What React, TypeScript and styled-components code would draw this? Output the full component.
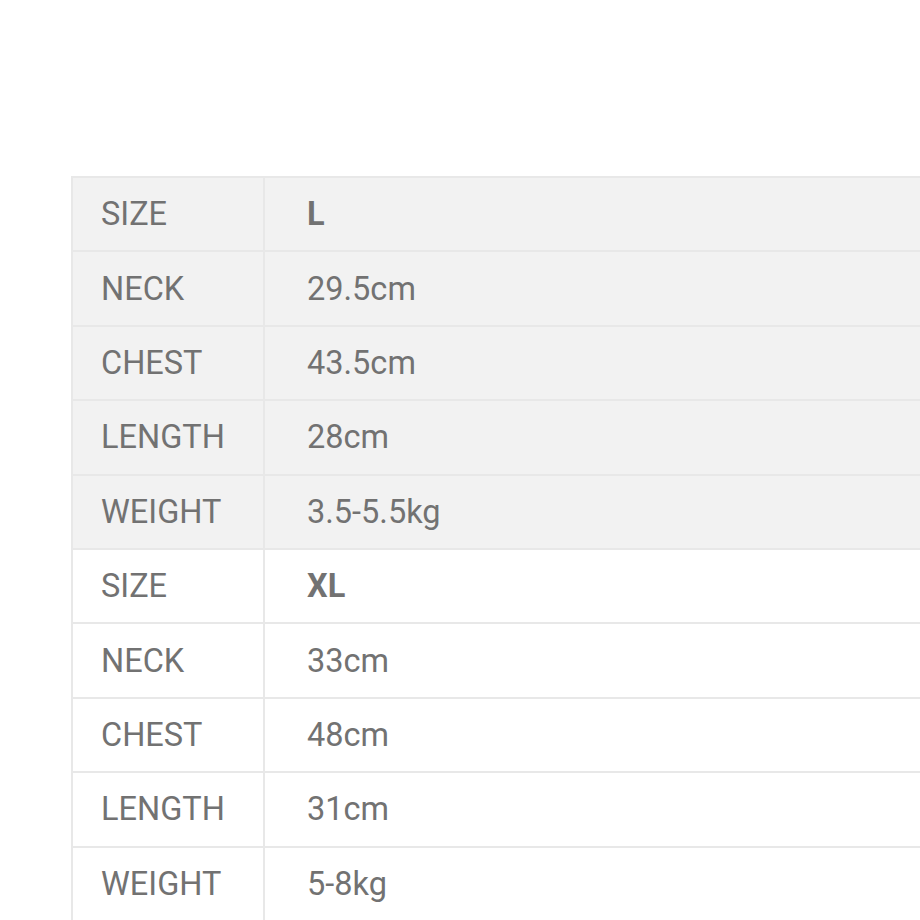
import React from "react";
import styled, { createGlobalStyle } from "styled-components";

const Global = createGlobalStyle`
  html, body { margin: 0; padding: 0; background: #ffffff; }
  body { font-family: Roboto, "Liberation Sans", Arial, sans-serif; overflow: hidden; }
`;

const Page = styled.div`
  width: 920px;
  height: 920px;
  overflow: hidden;
  padding: 176px 0 0 71px;
  box-sizing: border-box;
`;

const Table = styled.table`
  border-collapse: collapse;
  width: 1000px;
  table-layout: fixed;
`;

const Row = styled.tr<{ $shaded: boolean }>`
  background: ${(p) => (p.$shaded ? "#f2f2f2" : "#ffffff")};
  height: 74.4px;
`;

const Label = styled.td`
  width: 192px;
  border: 2px solid #e8e8e8;
  padding: 0 0 0 28px;
  box-sizing: border-box;
  font-size: 32.5px;
  color: #727272;
  vertical-align: middle;
  white-space: nowrap;
`;

const Value = styled.td<{ $bold: boolean }>`
  border: 2px solid #e8e8e8;
  padding: 0 0 0 42px;
  font-size: 32.5px;
  color: #727272;
  font-weight: ${(p) => (p.$bold ? 700 : 400)};
  vertical-align: middle;
  white-space: nowrap;
`;

const groups = [
  {
    shaded: true,
    rows: [
      ["SIZE", "L"],
      ["NECK", "29.5cm"],
      ["CHEST", "43.5cm"],
      ["LENGTH", "28cm"],
      ["WEIGHT", "3.5-5.5kg"],
    ],
  },
  {
    shaded: false,
    rows: [
      ["SIZE", "XL"],
      ["NECK", "33cm"],
      ["CHEST", "48cm"],
      ["LENGTH", "31cm"],
      ["WEIGHT", "5-8kg"],
    ],
  },
];

export default function App() {
  return (
    <>
      <Global />
      <Page>
        <Table>
          <tbody>
            {groups.flatMap((g, gi) =>
              g.rows.map(([k, v], ri) => (
                <Row key={`${gi}-${ri}`} $shaded={g.shaded}>
                  <Label>{k}</Label>
                  <Value $bold={k === "SIZE"}>{v}</Value>
                </Row>
              ))
            )}
          </tbody>
        </Table>
      </Page>
    </>
  );
}
